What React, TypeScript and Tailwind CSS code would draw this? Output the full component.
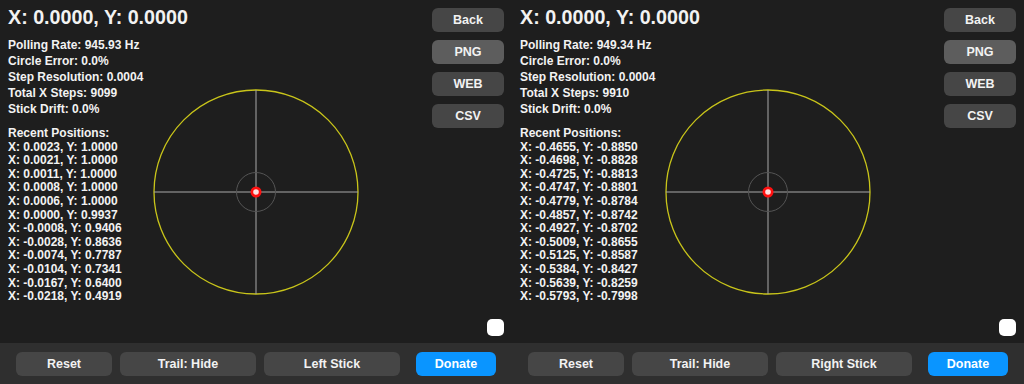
import React from "react";

type Pos = [string, string];

type Panel = {
  rate: string;
  steps: string;
  stick: string;
  recent: Pos[];
};

const panels: Panel[] = [
  {
    rate: "945.93",
    steps: "9099",
    stick: "Left Stick",
    recent: [
      ["0.0023", "1.0000"],
      ["0.0021", "1.0000"],
      ["0.0011", "1.0000"],
      ["0.0008", "1.0000"],
      ["0.0006", "1.0000"],
      ["0.0000", "0.9937"],
      ["-0.0008", "0.9406"],
      ["-0.0028", "0.8636"],
      ["-0.0074", "0.7787"],
      ["-0.0104", "0.7341"],
      ["-0.0167", "0.6400"],
      ["-0.0218", "0.4919"],
    ],
  },
  {
    rate: "949.34",
    steps: "9910",
    stick: "Right Stick",
    recent: [
      ["-0.4655", "-0.8850"],
      ["-0.4698", "-0.8828"],
      ["-0.4725", "-0.8813"],
      ["-0.4747", "-0.8801"],
      ["-0.4779", "-0.8784"],
      ["-0.4857", "-0.8742"],
      ["-0.4927", "-0.8702"],
      ["-0.5009", "-0.8655"],
      ["-0.5125", "-0.8587"],
      ["-0.5384", "-0.8427"],
      ["-0.5639", "-0.8259"],
      ["-0.5793", "-0.7998"],
    ],
  },
];

function StickPlot() {
  return (
    <svg width="220" height="343" viewBox="0 0 220 343" className="shrink-0">
      <circle cx="110" cy="192" r="102" fill="none" stroke="#c9c51a" strokeWidth="1.3" />
      <line x1="8" y1="192" x2="212" y2="192" stroke="#a8a8a8" strokeWidth="1" />
      <line x1="110" y1="90" x2="110" y2="294" stroke="#a8a8a8" strokeWidth="1" />
      <circle cx="110" cy="192" r="19.5" fill="none" stroke="#555" strokeWidth="1" />
      <circle cx="110" cy="192" r="5.5" fill="#ff1010" />
      <circle cx="110" cy="192" r="2.8" fill="#ffe0e0" />
    </svg>
  );
}

function SideButton({ label, light }: { label: string; light?: boolean }) {
  return (
    <div
      className={`h-6 w-full rounded-[6px] flex items-center justify-center text-[12.5px] font-bold text-[#f2f2f2] ${
        light ? "bg-[#5d5d5d]" : "bg-[#464646]"
      }`}
    >
      {label}
    </div>
  );
}

function StickPanel({ p }: { p: Panel }) {
  return (
    <div className="w-[512px] h-[384px] flex flex-col bg-[#1e1e1e]">
      <div className="h-[343px] flex">
        {/* stats + recent positions */}
        <div className="w-[146px] shrink-0 pl-2 pt-[5px] whitespace-nowrap text-[#f2f2f2] font-bold">
          <div className="text-[19.7px] leading-[24px]">X: 0.0000, Y: 0.0000</div>
          <div className="mt-[8px] text-[12px] leading-[16px]">
            <div>Polling Rate: {p.rate} Hz</div>
            <div>Circle Error: 0.0%</div>
            <div>Step Resolution: 0.0004</div>
            <div>Total X Steps: {p.steps}</div>
            <div>Stick Drift: 0.0%</div>
          </div>
          <div className="mt-[10px] text-[12px] leading-[13.6px]">
            <div>Recent Positions:</div>
            {p.recent.map(([x, y], i) => (
              <div key={i}>
                X: {x}, Y: {y}
              </div>
            ))}
          </div>
        </div>

        <StickPlot />

        <div className="flex-1" />

        {/* side buttons */}
        <div className="w-[72px] mr-2 pt-2 flex flex-col items-end">
          <div className="w-full flex flex-col gap-2">
            <SideButton label="Back" />
            <SideButton label="PNG" light />
            <SideButton label="WEB" />
            <SideButton label="CSV" />
          </div>
          <div className="mt-auto mb-[7px] w-[17px] h-[17px] rounded-[5px] bg-white" />
        </div>
      </div>

      {/* bottom bar */}
      <div className="flex-1 bg-[#2f2f2f] pl-4 pt-[9px] flex items-start text-[12.5px] font-bold text-[#f2f2f2]">
        <div className="w-[96px] h-6 rounded-[6px] bg-[#464646] flex items-center justify-center">Reset</div>
        <div className="ml-2 w-[136px] h-6 rounded-[6px] bg-[#464646] flex items-center justify-center">Trail: Hide</div>
        <div className="ml-2 w-[136px] h-6 rounded-[6px] bg-[#464646] flex items-center justify-center">{p.stick}</div>
        <div className="ml-4 w-[80px] h-6 rounded-[6px] bg-[#0a95ff] flex items-center justify-center text-white">Donate</div>
      </div>
    </div>
  );
}

export default function App() {
  return (
    <div className="w-[1024px] h-[384px] flex overflow-hidden font-['Liberation_Sans',Arial,sans-serif]">
      {panels.map((p) => (
        <StickPanel key={p.stick} p={p} />
      ))}
    </div>
  );
}
